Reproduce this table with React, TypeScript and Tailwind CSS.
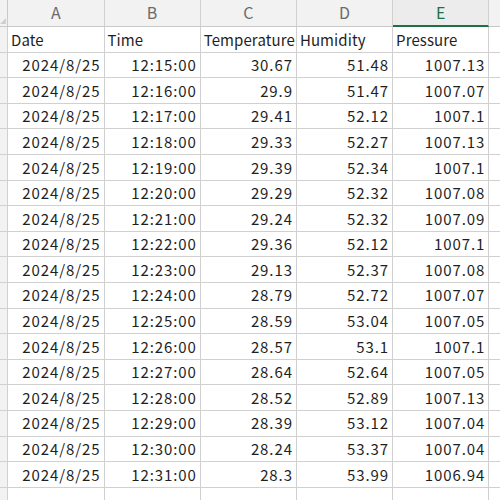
const rows: string[][] = [
  ['2024/8/25', '12:15:00', '30.67', '51.48', '1007.13'],
  ['2024/8/25', '12:16:00', '29.9', '51.47', '1007.07'],
  ['2024/8/25', '12:17:00', '29.41', '52.12', '1007.1'],
  ['2024/8/25', '12:18:00', '29.33', '52.27', '1007.13'],
  ['2024/8/25', '12:19:00', '29.39', '52.34', '1007.1'],
  ['2024/8/25', '12:20:00', '29.29', '52.32', '1007.08'],
  ['2024/8/25', '12:21:00', '29.24', '52.32', '1007.09'],
  ['2024/8/25', '12:22:00', '29.36', '52.12', '1007.1'],
  ['2024/8/25', '12:23:00', '29.13', '52.37', '1007.08'],
  ['2024/8/25', '12:24:00', '28.79', '52.72', '1007.07'],
  ['2024/8/25', '12:25:00', '28.59', '53.04', '1007.05'],
  ['2024/8/25', '12:26:00', '28.57', '53.1', '1007.1'],
  ['2024/8/25', '12:27:00', '28.64', '52.64', '1007.05'],
  ['2024/8/25', '12:28:00', '28.52', '52.89', '1007.13'],
  ['2024/8/25', '12:29:00', '28.39', '53.12', '1007.04'],
  ['2024/8/25', '12:30:00', '28.24', '53.37', '1007.04'],
  ['2024/8/25', '12:31:00', '28.3', '53.99', '1006.94'],
]

const headers = ['Date', 'Time', 'Temperature', 'Humidity', 'Pressure']
const letters = ['A', 'B', 'C', 'D', 'E']

const font = { fontFamily: '"Noto Sans CJK JP", "Noto Sans", sans-serif' }

const RowHead = () => (
  <div className="h-[25.6px] border-r border-b border-[#d0d0d0] bg-[#f2f2f2]" />
)

export default function App() {
  return (
    <div
      className="w-[500px] h-[500px] overflow-hidden bg-white text-[15px] text-[#1f1f1f]"
      style={font}
    >
      <div className="grid grid-cols-[8px_96.5px_96.2px_96.2px_96.2px_96.2px_1fr]">
        {/* column header row */}
        <div className="relative h-[27px] border-r border-b border-[#c9c9c9] bg-[#f2f2f2]">
          <div className="absolute right-[1px] bottom-[2px] w-0 h-0 border-l-[6px] border-l-transparent border-b-[6px] border-b-[#cfcfcf]" />
        </div>
        {letters.map((l) =>
          l === 'E' ? (
            <div
              key={l}
              className="h-[27px] flex items-center justify-center border-r border-[#d0d0d0] border-b-2 border-b-[#1e7145] bg-[#ececec] text-[#1e7145] text-[16px] pb-[2px]"
            >
              {l}
            </div>
          ) : (
            <div
              key={l}
              className="h-[27px] flex items-center justify-center border-r border-b border-[#d0d0d0] border-b-[#c9c9c9] bg-[#f2f2f2] text-[#6b6b6b] text-[16px] pb-[2px]"
            >
              {l}
            </div>
          )
        )}
        <div className="h-[27px] border-b border-[#c9c9c9] bg-[#f2f2f2]" />

        {/* field names */}
        <RowHead />
        {headers.map((h) => (
          <div
            key={h}
            className="h-[25.6px] flex items-center px-[3px] pt-[1px] border-r border-b border-[#d0d0d0] whitespace-nowrap overflow-visible tracking-[0.1px]"
          >
            {h}
          </div>
        ))}
        <div className="h-[25.6px] border-b border-[#d0d0d0]" />

        {/* data */}
        {rows.map((r, i) => (
          <div key={i} className="contents">
            <RowHead />
            {r.map((v, j) => (
              <div
                key={j}
                className="h-[25.6px] flex items-center justify-end pr-[3px] pt-[1px] border-r border-b border-[#d0d0d0] whitespace-nowrap tracking-[0.9px]"
              >
                {v}
              </div>
            ))}
            <div className="h-[25.6px] border-b border-[#d0d0d0]" />
          </div>
        ))}

        {/* trailing empty row */}
        <RowHead />
        {letters.map((l) => (
          <div key={l} className="h-[25.6px] border-r border-b border-[#d0d0d0]" />
        ))}
        <div className="h-[25.6px] border-b border-[#d0d0d0]" />
      </div>
    </div>
  )
}
